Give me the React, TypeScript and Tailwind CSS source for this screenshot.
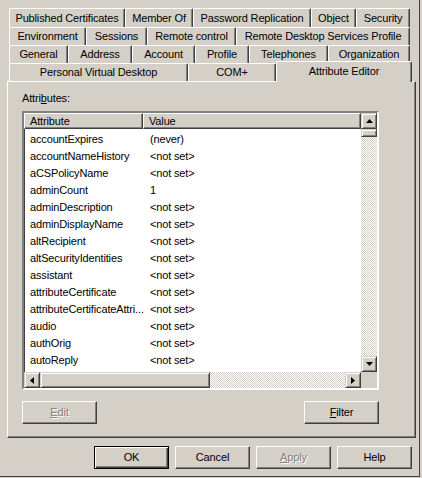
const raised =
  "border border-t-white border-l-white border-r-[#404040] border-b-[#404040] shadow-[inset_-1px_-1px_0_#808080]";
const sbButton =
  "border border-t-[#d4d0c8] border-l-[#d4d0c8] border-r-[#404040] border-b-[#404040] shadow-[inset_1px_1px_0_#ffffff,inset_-1px_-1px_0_#808080] bg-[#d4d0c8]";
const checker =
  "bg-[image:repeating-conic-gradient(#ffffff_0_25%,#d4d0c8_0_50%)] bg-[length:2px_2px]";

const tabRows: [string, number][][] = [
  [
    ["Published Certificates", 116],
    ["Member Of", 68],
    ["Password Replication", 118],
    ["Object", 45],
    ["Security", 54],
  ],
  [
    ["Environment", 77],
    ["Sessions", 61],
    ["Remote control", 89],
    ["Remote Desktop Services Profile", 174],
  ],
  [
    ["General", 59],
    ["Address", 64],
    ["Account", 63],
    ["Profile", 54],
    ["Telephones", 79],
    ["Organization", 82],
  ],
];

const attributes: [string, string][] = [
  ["accountExpires", "(never)"],
  ["accountNameHistory", "<not set>"],
  ["aCSPolicyName", "<not set>"],
  ["adminCount", "1"],
  ["adminDescription", "<not set>"],
  ["adminDisplayName", "<not set>"],
  ["altRecipient", "<not set>"],
  ["altSecurityIdentities", "<not set>"],
  ["assistant", "<not set>"],
  ["attributeCertificate", "<not set>"],
  ["attributeCertificateAttri...", "<not set>"],
  ["audio", "<not set>"],
  ["authOrig", "<not set>"],
  ["autoReply", "<not set>"],
  ["badPasswordTime", "(never)"],
];

function Tab({ label, width, tall }: { label: string; width: number; tall?: boolean }) {
  return (
    <div
      style={{ width }}
      className={`flex shrink-0 items-center justify-center rounded-t-[2px] border-t border-l border-r border-t-white border-l-white border-r-[#404040] bg-[#d4d0c8] shadow-[inset_-1px_0_0_#808080] ${
        tall ? "relative z-10 -mb-px h-[21px] pb-[2px]" : "h-full"
      }`}
    >
      {label}
    </div>
  );
}

function Arrow({ dir }: { dir: "up" | "down" | "left" | "right" }) {
  const vertical = dir === "up" || dir === "down";
  const points = {
    up: "3.5,0 7,4 0,4",
    down: "0,0 7,0 3.5,4",
    left: "4,0 0,3.5 4,7",
    right: "0,0 4,3.5 0,7",
  }[dir];
  return (
    <svg width={vertical ? 7 : 4} height={vertical ? 4 : 7} viewBox={vertical ? "0 0 7 4" : "0 0 4 7"}>
      <polygon points={points} fill="#000" />
    </svg>
  );
}

function Button({
  children,
  disabled,
  isDefault,
}: {
  children: React.ReactNode;
  disabled?: boolean;
  isDefault?: boolean;
}) {
  return (
    <div
      className={`flex h-[23px] w-[75px] items-center justify-center ${
        isDefault
          ? "border border-black shadow-[inset_1px_1px_0_#ffffff,inset_-1px_-1px_0_#404040,inset_-2px_-2px_0_#808080]"
          : raised
      } ${disabled ? "text-[#808080] [text-shadow:1px_1px_0_#ffffff]" : "text-black"}`}
    >
      {children}
    </div>
  );
}

export default function App() {
  return (
    <div className="h-[478px] w-[422px] bg-[#d4d0c8] font-['Liberation_Sans',Arial,sans-serif] text-[11px] tracking-[-0.15px] text-black">
      <div className="h-[477px] w-[420px] border-r border-b border-[#404040] pt-[8px]">
        <div className="flex flex-col pl-[9px]">
          {tabRows.map((row, i) => (
            <div key={i} className={`flex ${i === 0 ? "h-[19px]" : "h-[18px]"}`}>
              {row.map(([label, w]) => (
                <Tab key={label} label={label} width={w} />
              ))}
            </div>
          ))}
          <div className="flex h-[18px] items-end">
            <Tab label="Personal Virtual Desktop" width={179} />
            <Tab label="COM+" width={88} />
            <Tab label="Attribute Editor" width={136} tall />
          </div>
        </div>

        <div className="ml-[7px] flex h-[357px] w-[409px] flex-col border border-t-white border-l-white border-r-[#404040] border-b-[#404040] pl-[14px] shadow-[inset_-1px_-1px_0_#808080]">
          <div className="mt-[10px] h-[13px] leading-[13px]">
            Attri<span className="underline">b</span>utes:
          </div>

          <div className="mt-[6px] grid h-[279px] w-[357px] grid-cols-[1fr_16px] grid-rows-[1fr_16px] border-2 border-t-[#808080] border-l-[#808080] border-r-white border-b-white bg-white shadow-[inset_1px_1px_0_#404040,inset_-1px_-1px_0_#d4d0c8]">
            <div className="overflow-hidden">
              <div className="flex h-[16px] bg-[#d4d0c8] leading-[14px]">
                <div className={`w-[119px] pl-[5px] ${raised}`}>Attribute</div>
                <div className={`flex-1 pl-[5px] ${raised}`}>Value</div>
              </div>
              <div className="pt-[2px]">
                {attributes.map(([name, value]) => (
                  <div key={name} className="flex h-[17px] items-center">
                    <div className="w-[119px] shrink-0 pl-[6px] whitespace-nowrap">{name}</div>
                    <div className="pl-[7px] whitespace-nowrap">{value}</div>
                  </div>
                ))}
              </div>
            </div>

            <div className="flex flex-col">
              <div className={`flex h-[16px] items-center justify-center ${sbButton}`}>
                <Arrow dir="up" />
              </div>
              <div className={`h-[8px] ${sbButton}`} />
              <div className={`flex-1 ${checker}`} />
              <div className={`flex h-[16px] items-center justify-center ${sbButton}`}>
                <Arrow dir="down" />
              </div>
            </div>

            <div className="flex">
              <div className={`flex w-[16px] items-center justify-center ${sbButton}`}>
                <Arrow dir="left" />
              </div>
              <div className={`w-[170px] ${sbButton}`} />
              <div className={`flex-1 ${checker}`} />
              <div className={`flex w-[16px] items-center justify-center ${sbButton}`}>
                <Arrow dir="right" />
              </div>
            </div>
            <div className="bg-[#d4d0c8]" />
          </div>

          <div className="mt-[11px] flex w-[357px] justify-between">
            <Button disabled>
              <span className="underline">E</span>dit
            </Button>
            <Button>
              <span className="underline">F</span>ilter
            </Button>
          </div>
        </div>

        <div className="mt-[8px] flex justify-end gap-[6px] pr-[7px]">
          <Button isDefault>OK</Button>
          <Button>Cancel</Button>
          <Button disabled>
            <span className="underline">A</span>pply
          </Button>
          <Button>Help</Button>
        </div>
      </div>
    </div>
  );
}
